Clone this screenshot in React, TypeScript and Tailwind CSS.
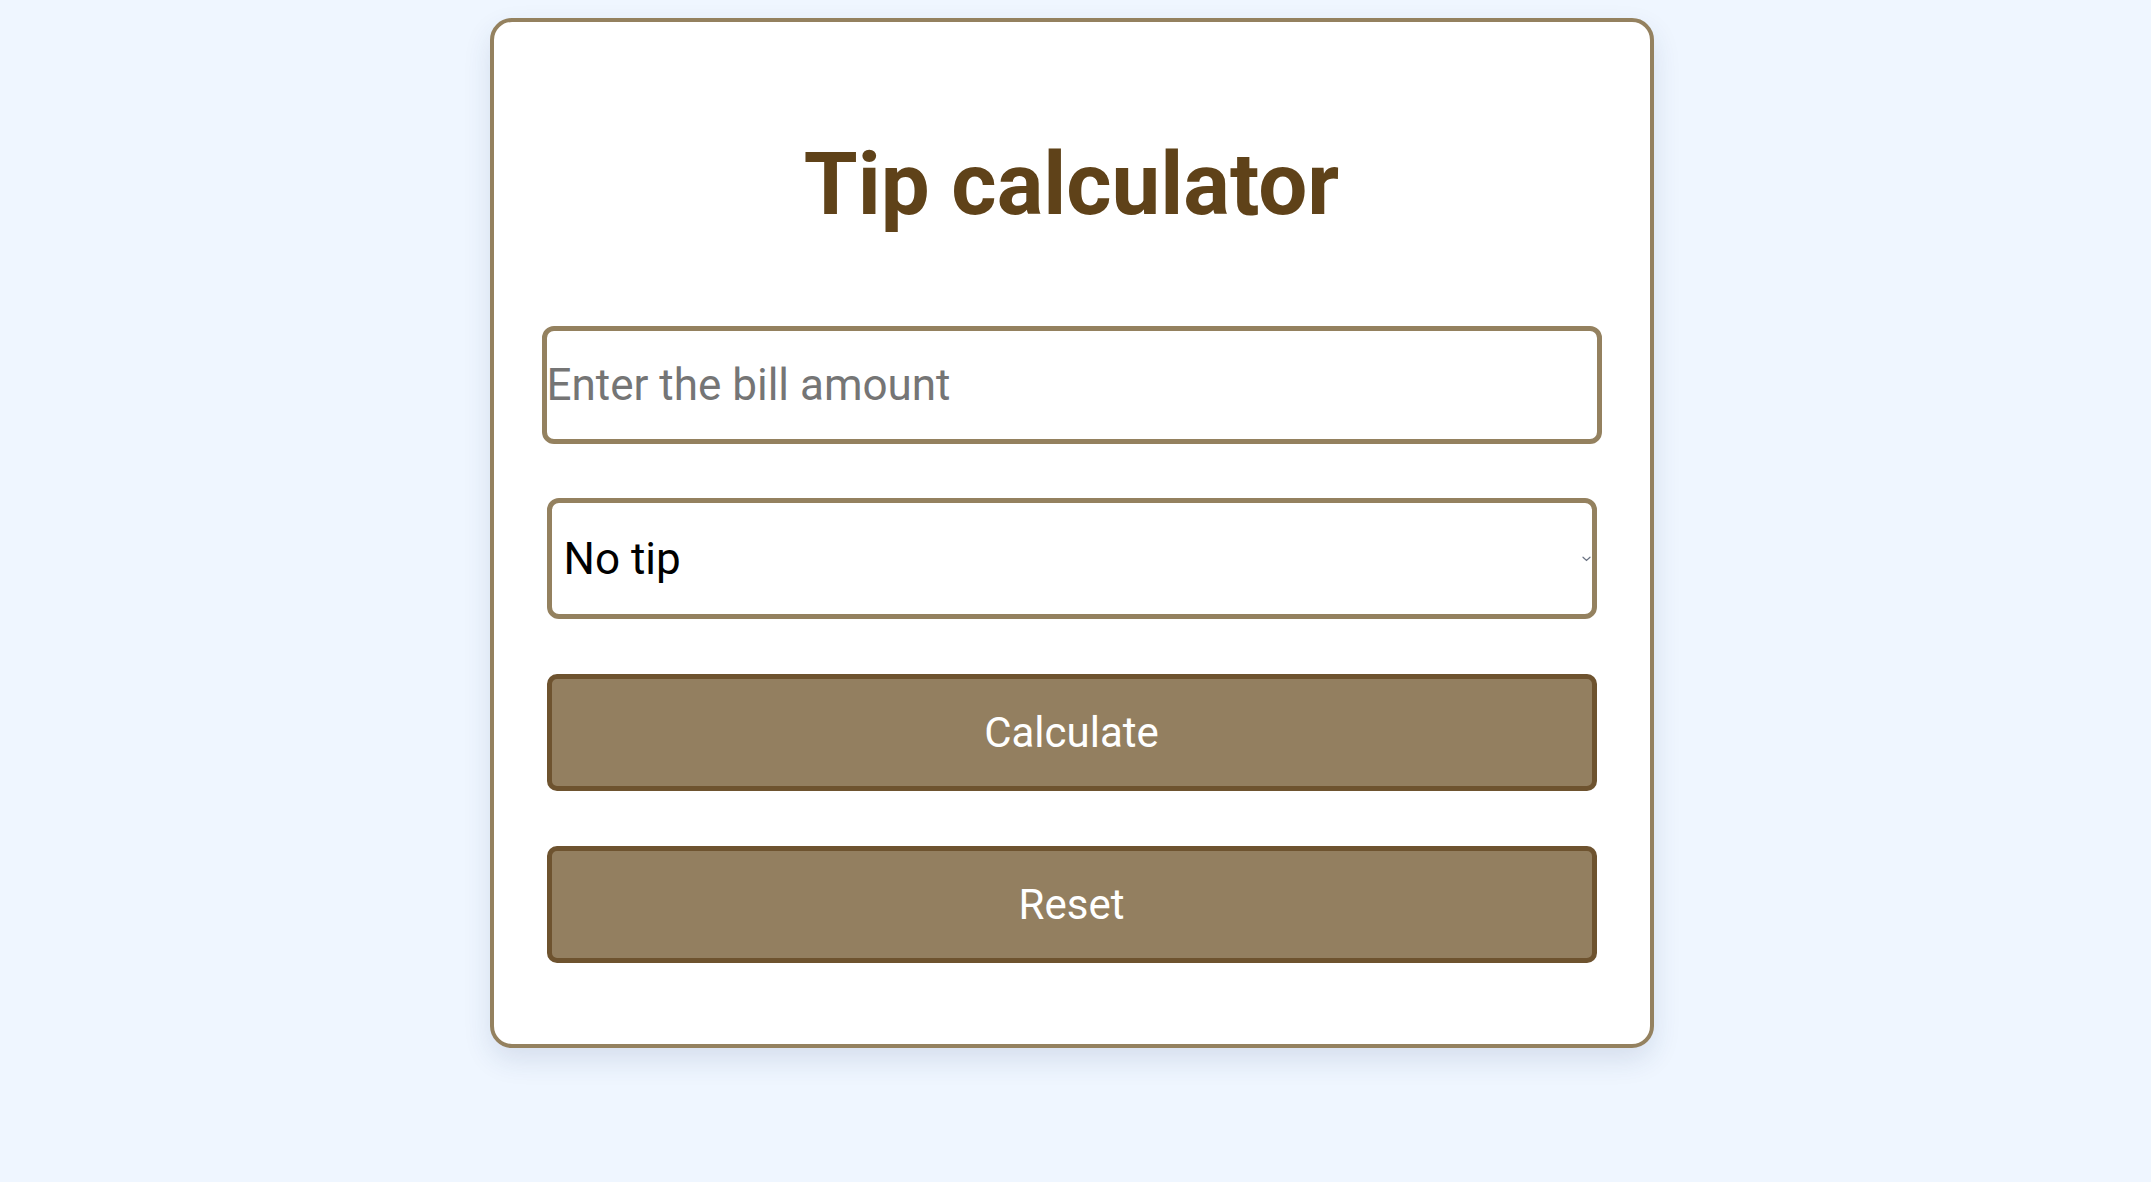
const TIP_OPTIONS = ["No tip", "5%", "10%", "15%", "20%"];

function ChevronIcon() {
  return (
    <svg
      width="9"
      height="6"
      viewBox="0 0 9 6"
      fill="none"
      aria-hidden="true"
      className="pointer-events-none absolute right-[6px] top-1/2 -translate-y-1/2 text-gray-500"
    >
      <path d="M1 1.2l3.5 3.3L8 1.2" stroke="currentColor" strokeWidth="1.2" strokeLinecap="round" />
    </svg>
  );
}

export default function App() {
  return (
    <div className="min-h-screen bg-[#eff6ff] font-['Roboto',_'Liberation_Sans',_sans-serif]">
      <div className="pr-[8px] pt-[18px]">
        <div className="mx-auto flex w-[1164px] flex-col rounded-[22px] border-4 border-[#94815f] bg-white px-[53px] pb-[81px] pt-[119px] shadow-[0_12px_28px_rgba(30,60,110,0.12)]">
          <h1 className="text-center text-[87px] font-bold leading-none text-[#5f4219]">Tip calculator</h1>

          <input
            type="text"
            placeholder="Enter the bill amount"
            className="-mx-[5px] mt-[98px] h-[118px] rounded-[12px] border-[5px] border-[#94815f] bg-white px-0 text-[44px] text-black outline-none placeholder:text-[#757575]"
          />

          <div className="relative mt-[54px]">
            <select
              defaultValue="No tip"
              className="h-[121px] w-full appearance-none rounded-[12px] border-[5px] border-[#94815f] bg-white pl-[12px] text-[44px] text-black outline-none"
            >
              {TIP_OPTIONS.map((option) => (
                <option key={option} value={option}>
                  {option}
                </option>
              ))}
            </select>
            <ChevronIcon />
          </div>

          <button
            type="button"
            className="mt-[55px] h-[117px] rounded-[10px] border-[5px] border-[#6e532f] bg-[#937f60] text-[42px] text-white"
          >
            Calculate
          </button>

          <button
            type="button"
            className="mt-[55px] h-[117px] rounded-[10px] border-[5px] border-[#6e532f] bg-[#937f60] text-[42px] text-white"
          >
            Reset
          </button>
        </div>
      </div>
    </div>
  );
}
